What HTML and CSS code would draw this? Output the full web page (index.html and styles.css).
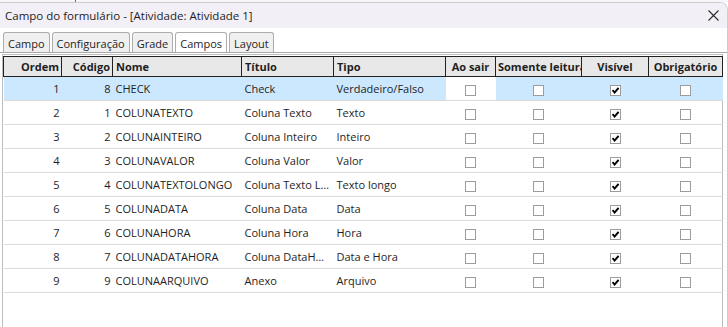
FILE: index.html
```html
<!DOCTYPE html>
<html lang="pt-BR">
<head>
    <meta charset="UTF-8">
    <title>Campo do formulário</title>
    <link rel="stylesheet" href="styles.css">
</head>
<body>
    <div class="topstrip"><span class="behind"></span></div>

<div class="window">
    <div class="titlebar">
        <span class="title">Campo do formulário - [Atividade: Atividade 1]</span>
        <svg class="close" width="11" height="11" viewBox="0 0 11 11">
            <path d="M0.5 0.5 L10.5 10.5 M10.5 0.5 L0.5 10.5" stroke="#2b2b2b" stroke-width="1.1" fill="none"/>
        </svg>
    </div>

    <div class="tabs">
        <div class="tab">Campo</div>
        <div class="tab">Configuração</div>
        <div class="tab">Grade</div>
        <div class="tab active">Campos</div>
        <div class="tab">Layout</div>
    </div>

    <div class="page">
        <div class="grid">
            <table>
                <colgroup>
                    <col style="width:58px">
                    <col style="width:51px">
                    <col style="width:129px">
                    <col style="width:92px">
                    <col style="width:112px">
                    <col style="width:50px">
                    <col style="width:86px">
                    <col style="width:67px">
                    <col style="width:74px">
                </colgroup>
                <thead>
                    <tr>
                        <th class="num">Ordem</th>
                        <th class="num">Código</th>
                        <th>Nome</th>
                        <th>Título</th>
                        <th>Tipo</th>
                        <th class="mid">Ao sair</th>
                        <th class="clip">Somente leitura</th>
                        <th class="mid">Visível</th>
                        <th class="mid">Obrigatório</th>
                    </tr>
                </thead>
                <tbody>
                    <tr class="selected">
                        <td class="num">1</td><td class="num">8</td><td>CHECK</td><td>Check</td><td>Verdadeiro/Falso</td>
                        <td class="mid focus"><span class="cb"></span></td>
                        <td class="mid"><span class="cb"></span></td>
                        <td class="mid"><span class="cb on"><svg viewBox="0 0 9 9"><path d="M1.6 4.2 L3.6 6.6 L7.6 1.8"/></svg></span></td>
                        <td class="mid"><span class="cb"></span></td>
                    </tr>
                    <tr>
                        <td class="num">2</td><td class="num">1</td><td>COLUNATEXTO</td><td>Coluna Texto</td><td>Texto</td>
                        <td class="mid"><span class="cb"></span></td>
                        <td class="mid"><span class="cb"></span></td>
                        <td class="mid"><span class="cb on"><svg viewBox="0 0 9 9"><path d="M1.6 4.2 L3.6 6.6 L7.6 1.8"/></svg></span></td>
                        <td class="mid"><span class="cb"></span></td>
                    </tr>
                    <tr>
                        <td class="num">3</td><td class="num">2</td><td>COLUNAINTEIRO</td><td>Coluna Inteiro</td><td>Inteiro</td>
                        <td class="mid"><span class="cb"></span></td>
                        <td class="mid"><span class="cb"></span></td>
                        <td class="mid"><span class="cb on"><svg viewBox="0 0 9 9"><path d="M1.6 4.2 L3.6 6.6 L7.6 1.8"/></svg></span></td>
                        <td class="mid"><span class="cb"></span></td>
                    </tr>
                    <tr>
                        <td class="num">4</td><td class="num">3</td><td>COLUNAVALOR</td><td>Coluna Valor</td><td>Valor</td>
                        <td class="mid"><span class="cb"></span></td>
                        <td class="mid"><span class="cb"></span></td>
                        <td class="mid"><span class="cb on"><svg viewBox="0 0 9 9"><path d="M1.6 4.2 L3.6 6.6 L7.6 1.8"/></svg></span></td>
                        <td class="mid"><span class="cb"></span></td>
                    </tr>
                    <tr>
                        <td class="num">5</td><td class="num">4</td><td>COLUNATEXTOLONGO</td><td>Coluna Texto Longo</td><td>Texto longo</td>
                        <td class="mid"><span class="cb"></span></td>
                        <td class="mid"><span class="cb"></span></td>
                        <td class="mid"><span class="cb on"><svg viewBox="0 0 9 9"><path d="M1.6 4.2 L3.6 6.6 L7.6 1.8"/></svg></span></td>
                        <td class="mid"><span class="cb"></span></td>
                    </tr>
                    <tr>
                        <td class="num">6</td><td class="num">5</td><td>COLUNADATA</td><td>Coluna Data</td><td>Data</td>
                        <td class="mid"><span class="cb"></span></td>
                        <td class="mid"><span class="cb"></span></td>
                        <td class="mid"><span class="cb on"><svg viewBox="0 0 9 9"><path d="M1.6 4.2 L3.6 6.6 L7.6 1.8"/></svg></span></td>
                        <td class="mid"><span class="cb"></span></td>
                    </tr>
                    <tr>
                        <td class="num">7</td><td class="num">6</td><td>COLUNAHORA</td><td>Coluna Hora</td><td>Hora</td>
                        <td class="mid"><span class="cb"></span></td>
                        <td class="mid"><span class="cb"></span></td>
                        <td class="mid"><span class="cb on"><svg viewBox="0 0 9 9"><path d="M1.6 4.2 L3.6 6.6 L7.6 1.8"/></svg></span></td>
                        <td class="mid"><span class="cb"></span></td>
                    </tr>
                    <tr>
                        <td class="num">8</td><td class="num">7</td><td>COLUNADATAHORA</td><td>Coluna DataHora</td><td>Data e Hora</td>
                        <td class="mid"><span class="cb"></span></td>
                        <td class="mid"><span class="cb"></span></td>
                        <td class="mid"><span class="cb on"><svg viewBox="0 0 9 9"><path d="M1.6 4.2 L3.6 6.6 L7.6 1.8"/></svg></span></td>
                        <td class="mid"><span class="cb"></span></td>
                    </tr>
                    <tr>
                        <td class="num">9</td><td class="num">9</td><td>COLUNAARQUIVO</td><td>Anexo</td><td>Arquivo</td>
                        <td class="mid"><span class="cb"></span></td>
                        <td class="mid"><span class="cb"></span></td>
                        <td class="mid"><span class="cb on"><svg viewBox="0 0 9 9"><path d="M1.6 4.2 L3.6 6.6 L7.6 1.8"/></svg></span></td>
                        <td class="mid"><span class="cb"></span></td>
                    </tr>
                </tbody>
            </table>
        </div>
    </div>
</div>
</body>
</html>
```

FILE: styles.css
```css
body {
    margin: 0;
    height: 327px;
    overflow: hidden;
    display: flex;
    flex-direction: column;
    font-family: "Open Sans", "Noto Sans", sans-serif;
    font-size: 11px;
    color: #1e1e1e;
    background-color: #ffffff;
}

.topstrip {
    height: 2px;
    display: flex;
    background-color: #f6f6f6;
}

.topstrip .behind {
    width: 75px;
    border-right: 1px solid #6b6b6b;
}

.window {
    flex: 1;
    display: flex;
    flex-direction: column;
    border-top: 1px solid #cdcdcd;
    border-right: 1px solid #cdcdcd;
    border-top-right-radius: 8px;
    min-height: 0;
}

.titlebar {
    height: 25px;
    display: flex;
    align-items: center;
    justify-content: space-between;
    padding: 0 8px 0 5px;
    background-color: #f3eff6;
    border-top-right-radius: 7px;
}

.title {
    font-size: 11.5px;
}

/* tab strip */
.tabs {
    display: flex;
    gap: 2px;
    padding: 4px 0 0 3px;
    border-bottom: 1px solid #a8a8a8;
}

.tab {
    height: 20px;
    box-sizing: border-box;
    padding: 3px 4px 0;
    line-height: 16px;
    border: 1px solid #adadad;
    border-bottom: 0;
    border-radius: 3px 3px 0 0;
    background-color: #f0f0f0;
}

.tab.active {
    background-color: #ffffff;
}

.page {
    flex: 1;
    display: flex;
    flex-direction: column;
    padding-top: 1px;
    min-height: 0;
}

.grid {
    flex: 1;
    margin: 0 4px 0 2px;
    padding-top: 1px;
    border: 1px solid #bdbdbd;
    border-bottom: 0;
}

table {
    width: 719px;
    table-layout: fixed;
    border-collapse: collapse;
}

th {
    height: 19px;
    padding: 0 3px;
    border: 1px solid #222222;
    background-color: #e8e8e8;
    font-weight: bold;
    text-align: left;
    white-space: nowrap;
    overflow: hidden;
}

td {
    height: 23px;
    padding: 0 3px;
    border-bottom: 1px solid #dcdcdc;
    white-space: nowrap;
    overflow: hidden;
    text-overflow: ellipsis;
}

.num {
    text-align: right;
    padding-right: 2px;
}

th.mid, td.mid {
    text-align: center;
}

th.clip {
    padding-left: 2px;
    text-overflow: clip;
}

tr.selected td {
    background-color: #cce8ff;
}

tr.selected td.focus {
    background-color: #ffffff;
}

.cb {
    display: inline-block;
    width: 11px;
    height: 11px;
    box-sizing: border-box;
    border: 1px solid #9c9c9c;
    background-color: #ffffff;
    vertical-align: middle;
}

.cb svg {
    display: block;
    width: 9px;
    height: 9px;
}

.cb svg path {
    fill: none;
    stroke: #000000;
    stroke-width: 1.9;
}
```
